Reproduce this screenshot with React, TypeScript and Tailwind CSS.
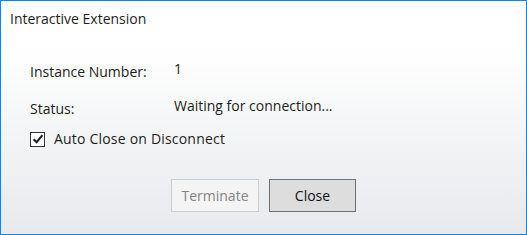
export default function App() {
  return (
    <div
      className="w-[527px] h-[235px] border border-[#1883d7] bg-gradient-to-b from-white from-[20%] to-[#e7e9ec] text-[14px] text-[#1e1e1e] flex flex-col"
      style={{ fontFamily: '"Open Sans", "Noto Sans", sans-serif' }}
    >
      <div className="pl-[9px] pt-[8px] leading-[20px]">Interactive Extension</div>

      <div className="pl-[29px] mt-[33px] flex flex-col">
        <div className="flex leading-[20px]">
          <span className="w-[144px]">Instance Number:</span>
          <span className="-mt-[3px]">1</span>
        </div>
        <div className="flex leading-[20px] mt-[17px]">
          <span className="w-[144px]">Status:</span>
          <span className="-mt-[3px]">Waiting for connection...</span>
        </div>
        <label className="flex items-center gap-[9px] mt-[10px] leading-[20px]">
          <span className="w-[15px] h-[15px] border border-[#333] bg-white flex items-center justify-center">
            <svg width="12" height="12" viewBox="0 0 12 12">
              <path d="M1.6 6.2 L4.6 9.2 L10.4 2.2" fill="none" stroke="#1e1e1e" strokeWidth="2" />
            </svg>
          </span>
          <span className="tracking-[0.2px]">Auto Close on Disconnect</span>
        </label>
      </div>

      <div className="flex gap-[10px] pl-[170px] mt-[30px]">
        <button
          disabled
          className="w-[88px] h-[33px] border border-[#cccccc] bg-[#f4f4f4] text-[#838383] leading-none"
        >
          Terminate
        </button>
        <button className="w-[87px] h-[33px] border border-[#707070] bg-[#dddddd] text-[#111] leading-none">
          Close
        </button>
      </div>
    </div>
  );
}
